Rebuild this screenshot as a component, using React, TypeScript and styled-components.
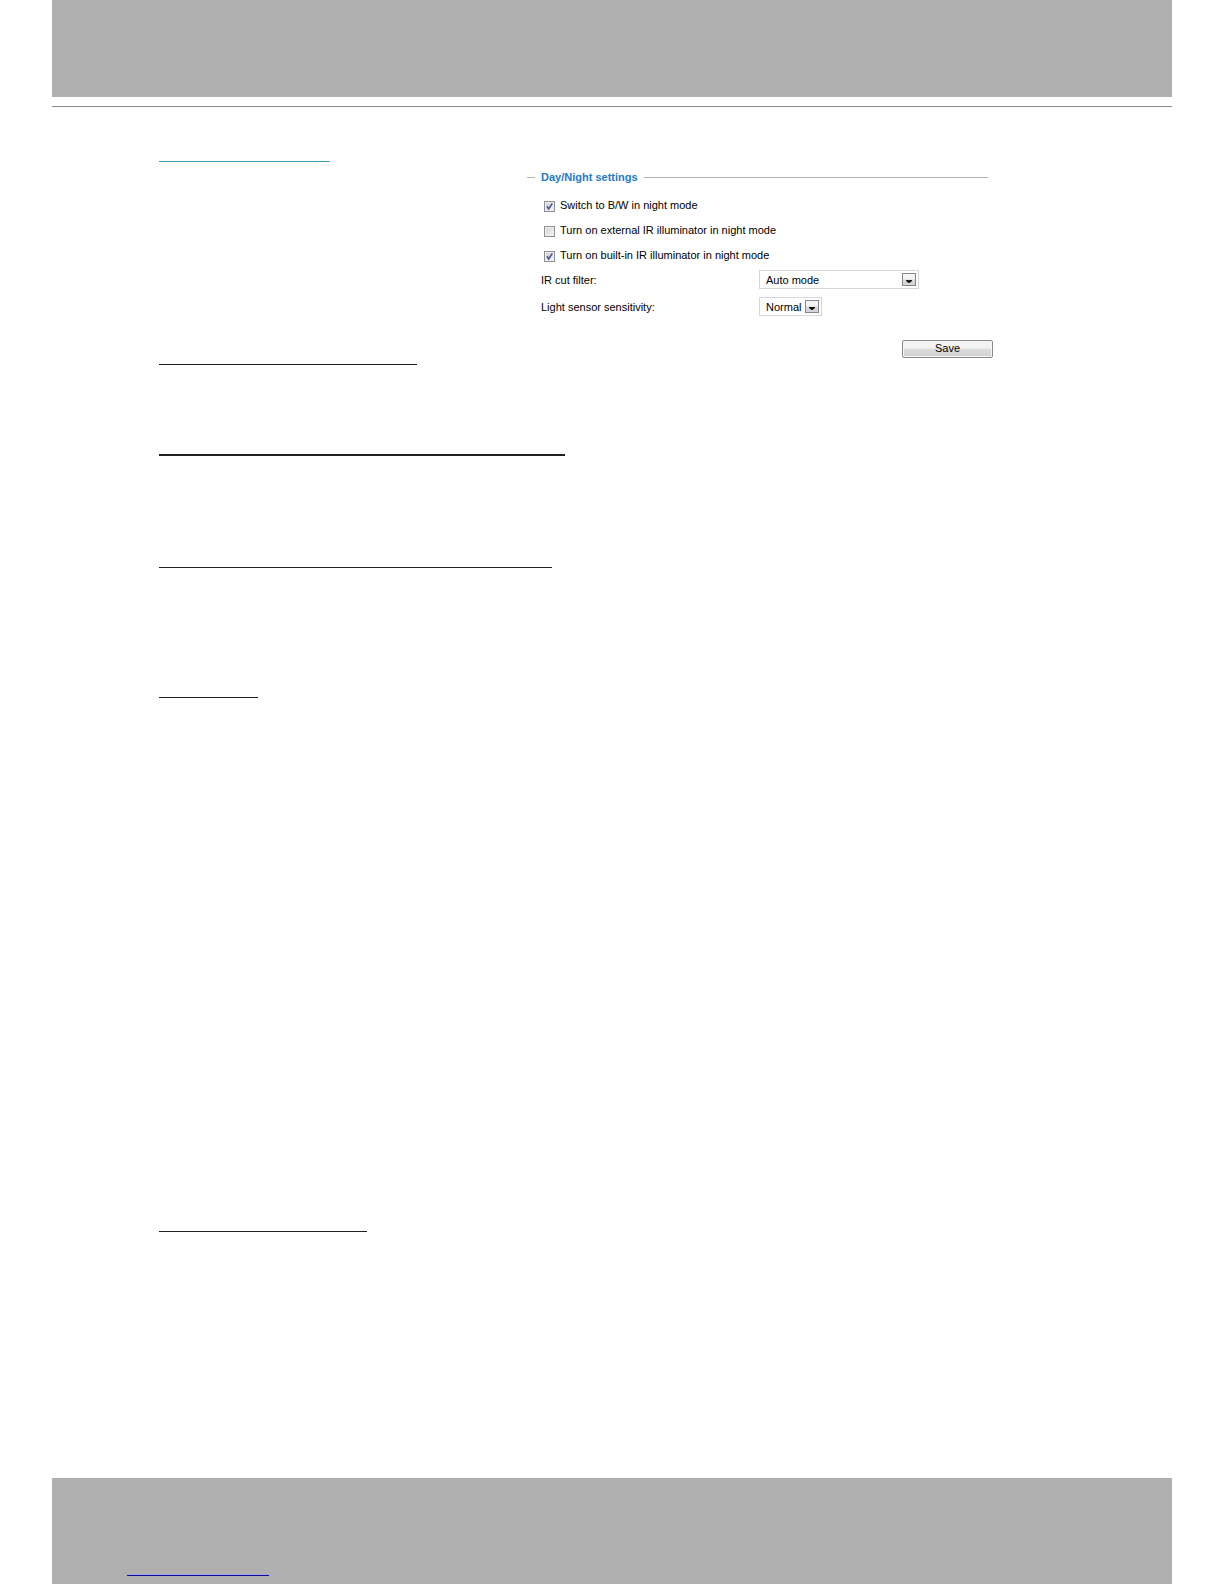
import React, { useState } from "react";
import styled, { createGlobalStyle } from "styled-components";

const GlobalStyle = createGlobalStyle`
  *, *::before, *::after { box-sizing: border-box; }
  body {
    margin: 0;
    background: #fff;
    color: #000;
    font-family: "Liberation Sans", Arial, sans-serif;
    font-size: 11px;
  }
`;

const Page = styled.div`
  display: flex;
  flex-direction: column;
  min-height: 100vh;
  padding: 0 52px;
`;

const Header = styled.header`
  height: 97px;
  background: #b0b0b0;
`;

const HeaderRule = styled.hr`
  width: 100%;
  height: 1px;
  margin: 9px 0 0;
  border: 0;
  background: #8b8b8b;
`;

const Main = styled.main`
  flex: 1;
  padding: 54px 107px 0;
`;

const Intro = styled.div`
  display: flex;
  align-items: flex-start;
`;

const IntroAside = styled.div`
  flex: 0 0 368px;
`;

const Topic = styled.section<{ $space: number }>`
  min-height: ${(p) => p.$space}px;
`;

const TopicRule = styled.hr<{ $length: number; $color?: string; $weight?: number }>`
  width: ${(p) => p.$length}px;
  height: ${(p) => p.$weight ?? 1}px;
  margin: 0;
  border: 0;
  background: ${(p) => p.$color ?? "#231f20"};
`;

const Panel = styled.form`
  flex: 0 1 466px;
  margin-top: 9px;
`;

const PanelTitle = styled.h2`
  display: flex;
  align-items: center;
  gap: 6px;
  margin: 0 5px 9px 0;
  color: #1f7ac4;
  font-size: 11px;
  line-height: 14px;
  white-space: nowrap;

  &::before,
  &::after {
    content: "";
    height: 1px;
    background: #b4b4b4;
  }
  &::before { width: 8px; }
  &::after { flex: 1; }
`;

const CheckRow = styled.div`
  display: flex;
  align-items: flex-end;
  gap: 5px;
  height: 25px;
  padding: 0 0 6px 17px;
`;

const CheckFrame = styled.span`
  position: relative;
  display: flex;
  width: 11px;
  height: 11px;
`;

const Check = styled.input`
  appearance: none;
  width: 11px;
  height: 11px;
  margin: 0;
  border: 1px solid #8e8f8f;
  background: linear-gradient(135deg, #cfd0d2, #f6f6f6);
  box-shadow: inset 0 0 0 1px #f0f0f0;
`;

const CheckMark = styled.svg`
  position: absolute;
  inset: 0;
  pointer-events: none;
`;

const CheckLabel = styled.label`
  line-height: 14px;
`;

const Fields = styled.div`
  display: grid;
  grid-template-columns: 218px auto;
  justify-content: start;
  align-items: center;
  row-gap: 8px;
  margin-top: 2px;
  padding-left: 14px;
`;

const FieldLabel = styled.label`
  padding-top: 2px;
  line-height: 17px;
`;

const SelectFrame = styled.div<{ $width: number }>`
  position: relative;
  width: ${(p) => p.$width}px;
  height: 19px;
`;

const Select = styled.select`
  appearance: none;
  display: block;
  width: 100%;
  height: 19px;
  padding: 0 0 0 6px;
  border: 1px solid #d5d7d9;
  border-radius: 0;
  background: #fff;
  color: #000;
  font: inherit;
`;

const SelectArrow = styled.svg`
  position: absolute;
  top: 3px;
  right: 3px;
  pointer-events: none;
`;

const Actions = styled.div`
  display: flex;
  justify-content: flex-end;
  margin-top: 24px;
`;

const SaveButton = styled.button`
  width: 91px;
  height: 18px;
  padding: 0 0 2px;
  border: 1px solid #8a8a8a;
  border-radius: 2px;
  background: linear-gradient(#f3f3f3 0 45%, #dcdcdc 50%, #d3d3d3);
  box-shadow: inset 0 0 0 1px #f4f4f4;
  color: #000;
  font: inherit;
`;

const Footer = styled.footer`
  display: flex;
  align-items: flex-end;
  height: 106px;
  padding: 0 75px 8px;
  background: #b0b0b0;
`;

const FooterLink = styled.a`
  width: 142px;
  height: 14px;
  border-bottom: 1px solid #0d0d96;
  box-shadow: inset 0 -1px #a3a3e8;
`;

type CheckOptionProps = { id: string; label: string; initial: boolean };

function CheckOption({ id, label, initial }: CheckOptionProps) {
  const [on, setOn] = useState(initial);
  return (
    <CheckRow>
      <CheckFrame>
        <Check id={id} type="checkbox" checked={on} onChange={() => setOn(!on)} />
        {on && (
          <CheckMark width="11" height="11" viewBox="0 0 11 11" aria-hidden="true">
            <path d="M3 5.2 4.7 8 8.3 2.4" fill="none" stroke="#4f5aa0" strokeWidth="1.7" />
          </CheckMark>
        )}
      </CheckFrame>
      <CheckLabel htmlFor={id}>{label}</CheckLabel>
    </CheckRow>
  );
}

type SelectFieldProps = { id: string; label: string; width: number; options: string[] };

function SelectField({ id, label, width, options }: SelectFieldProps) {
  return (
    <>
      <FieldLabel htmlFor={id}>{label}</FieldLabel>
      <SelectFrame $width={width}>
        <Select id={id}>
          {options.map((o) => (
            <option key={o}>{o}</option>
          ))}
        </Select>
        <SelectArrow width="14" height="13" viewBox="0 0 14 13" aria-hidden="true">
          <defs>
            <linearGradient id={`${id}-face`} x2="0" y2="1">
              <stop offset="0.4" stopColor="#f4f4f4" />
              <stop offset="0.6" stopColor="#d8d8da" />
            </linearGradient>
          </defs>
          <rect x=".5" y=".5" width="13" height="12" fill={`url(#${id}-face)`} stroke="#85888b" />
          <path d="M4 7h6v1L7.5 10h-1L4 8z" fill="#111" />
        </SelectArrow>
      </SelectFrame>
    </>
  );
}

export default function App() {
  return (
    <Page>
      <GlobalStyle />
      <Header />
      <HeaderRule />
      <Main>
        <Intro>
          <IntroAside>
            <Topic $space={203}>
              <TopicRule $length={171} $color="#3a9db5" />
            </Topic>
            <TopicRule $length={258} />
          </IntroAside>
          <Panel onSubmit={(e) => e.preventDefault()}>
            <PanelTitle>Day/Night settings</PanelTitle>
            <CheckOption id="bw" label="Switch to B/W in night mode" initial />
            <CheckOption id="ext" label="Turn on external IR illuminator in night mode" initial={false} />
            <CheckOption id="builtin" label="Turn on built-in IR illuminator in night mode" initial />
            <Fields>
              <SelectField id="filter" label="IR cut filter:" width={160} options={["Auto mode"]} />
              <SelectField id="sensitivity" label="Light sensor sensitivity:" width={63} options={["Normal"]} />
            </Fields>
            <Actions>
              <SaveButton type="submit">Save</SaveButton>
            </Actions>
          </Panel>
        </Intro>
        <Topic $space={89} />
        <Topic $space={113}>
          <TopicRule $length={406} $weight={2} />
        </Topic>
        <Topic $space={130}>
          <TopicRule $length={393} />
        </Topic>
        <Topic $space={534}>
          <TopicRule $length={99} />
        </Topic>
        <Topic $space={247}>
          <TopicRule $length={208} />
        </Topic>
      </Main>
      <Footer>
        <FooterLink href="#" aria-label="Website" />
      </Footer>
    </Page>
  );
}
